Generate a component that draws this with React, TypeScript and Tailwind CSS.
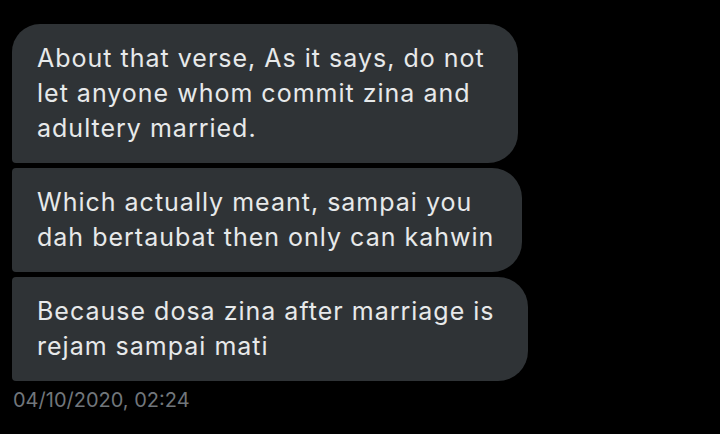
export default function App() {
  const msgs = [
    { text: "About that verse, As it says, do not let anyone whom commit zina and adultery married.", cls: "w-[506px] rounded-tl-[28px] rounded-bl-[4px]" },
    { text: "Which actually meant, sampai you dah bertaubat then only can kahwin", cls: "w-[510px] rounded-l-[4px]" },
    { text: "Because dosa zina after marriage is rejam sampai mati", cls: "w-[516px] rounded-l-[4px]" },
  ];

  return (
    <div className="w-[720px] h-[434px] bg-black overflow-hidden" style={{ fontFamily: "Inter, 'Noto Sans', sans-serif" }}>
      <div className="pt-[24px] pl-[12px] flex flex-col items-start gap-[5px]">
        {msgs.map((m, i) => (
          <div
            key={i}
            className={`bg-[#2f3336] text-[#e7e9ea] text-[25px] tracking-[1px] leading-[35px] pl-[25px] pr-[10px] py-[17px] rounded-r-[30px] ${m.cls}`}
          >
            {m.text}
          </div>
        ))}
        <div className="text-[#71767b] text-[20px] leading-[24px] mt-[2px] pl-[1px]">04/10/2020, 02:24</div>
      </div>
    </div>
  );
}
